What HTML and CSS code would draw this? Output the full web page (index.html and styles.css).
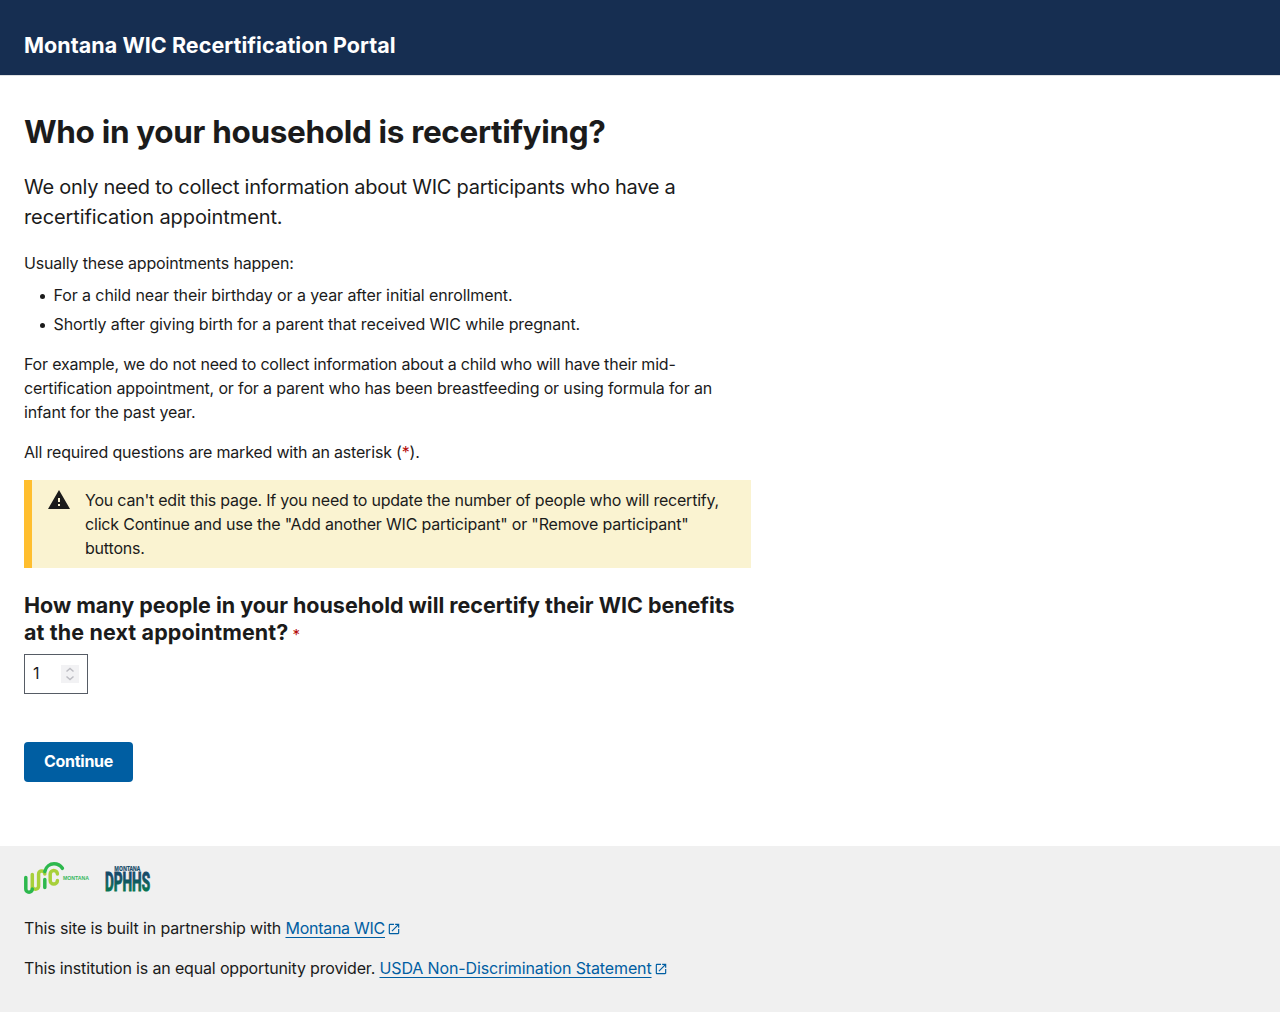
FILE: index.html
```
<!DOCTYPE html>
<html lang="en">
<head>
<meta charset="utf-8">
<title>Montana WIC Recertification Portal</title>
<link rel="stylesheet" href="styles.css">
</head>
<body>
<header class="header"><span class="site-title">Montana WIC Recertification Portal</span></header>
<main class="main">
  <h1 class="title">Who in your household is recertifying?</h1>
  <p class="intro"><span class="snug">We only need to collect information about WIC participants who have a</span><br><span>recertification appointment.</span></p>
  <p class="lead-in">Usually these appointments happen:</p>
  <ul class="list">
    <li><span class="birthday">For a child near their birthday or a year after initial enrollment.</span></li>
    <li><span>Shortly after giving birth for a parent that received WIC while pregnant.</span></li>
  </ul>
  <p class="example"><span class="snug">For example, we do not need to collect information about a child who will have their mid-</span><br><span>certification appointment, or for a parent who has been breastfeeding or using formula for an</span><br><span>infant for the past year.</span></p>
  <p class="required-note">All required questions are marked with an asterisk (<b class="star">*</b>).</p>
  <div class="alert">
    <svg class="alert-icon" viewBox="0 0 24 24"><path d="M1 21h22L12 2 1 21zm12-3h-2v-2h2v2zm0-4h-2v-4h2v4z"/></svg>
    <p class="alert-text"><span class="snug">You can't edit this page. If you need to update the number of people who will recertify,</span><br><span>click Continue and use the "Add another WIC participant" or "Remove participant"</span><br><span>buttons.</span></p>
  </div>
  <div class="question"><span class="snug">How many people in your household will recertify their WIC benefits</span><br><span>at the next appointment?</span><b class="star">*</b></div>
  <div class="number"><span class="number-value">1</span>
    <svg class="spinner" viewBox="0 0 18 18"><path d="M5.500 6.500 9 3.500l3.500 3M5.500 11.500 9 14.500l3.500-3"/></svg>
  </div>
  <button class="button" type="button">Continue</button>
</main>
<footer class="footer">
  <div class="logos">
    <svg class="wic-logo" viewBox="0 0 70 32">
      <g fill="none" stroke-width="3.500" stroke-linecap="round">
        <path stroke="#a8d03a" d="M8.300 27V12.500M8.300 24.500a3.200 3.200 0 0 0 6.300 0V12a3.100 3.100 0 0 1 6.200 0"/>
        <path stroke="#2db84d" d="M1.800 15.500V27a3.250 3.250 0 0 0 6.500 0"/>
        <path stroke="#2db84d" d="M20.800 17.500V25.500M20.800 9.500C22 4.500 26 1.800 30 1.800C34 1.800 36.500 3.500 38.400 6.300"/>
        <path stroke="#a8d03a" d="M33.400 12a3.600 3.600 0 0 0-7.200 0V18.500a3.600 3.600 0 0 0 7.200 0"/>
      </g>
      <text class="wic-name" x="39" y="17.600" textLength="26" lengthAdjust="spacingAndGlyphs">MONTANA</text>
    </svg>
    <svg class="dphhs-logo" viewBox="0 0 50 32">
      <defs><linearGradient id="teal" x1="0" y1="0" x2="0" y2="1"><stop offset="0.3" stop-color="#164b68"/><stop offset="0.8" stop-color="#087452"/></linearGradient></defs>
      <text class="dphhs-state" x="9.300" y="8.800" textLength="26" lengthAdjust="spacingAndGlyphs">MONTANA</text>
      <text class="dphhs-name" x="0" y="28.500" textLength="45" lengthAdjust="spacingAndGlyphs" fill="url(#teal)" stroke="url(#teal)">DPHHS</text>
    </svg>
  </div>
  <p class="foot-line"><span class="partner">This site is built in partnership with</span> <a class="link link-short" href="#">Montana WIC</a><svg class="external" viewBox="0 0 24 24"><path d="M19 19H5V5h7V3H5a2 2 0 0 0-2 2v14a2 2 0 0 0 2 2h14c1.100 0 2-.9 2-2v-7h-2v7zM14 3v2h3.590l-9.830 9.830 1.410 1.410L19 6.410V10h2V3h-7z"/></svg></p>
  <p class="foot-line"><span>This institution is an equal opportunity provider.</span> <a class="link" href="#">USDA Non-Discrimination Statement</a><svg class="external" viewBox="0 0 24 24"><path d="M19 19H5V5h7V3H5a2 2 0 0 0-2 2v14a2 2 0 0 0 2 2h14c1.100 0 2-.9 2-2v-7h-2v7zM14 3v2h3.590l-9.830 9.830 1.410 1.410L19 6.410V10h2V3h-7z"/></svg></p>
</footer>
</body>
</html>
```
FILE: styles.css
```
* { box-sizing: border-box; }
body { margin: 0; font: 16px/24px Inter, sans-serif; color: #1b1b1b; background: #fff; }
h1, p, ul { margin: 0; }
.header { height: 76px; background: #162e51; border-bottom: 1px solid #dfe1e2; padding: 32px 24px 0; color: #fff; }
.site-title { display: block; font-weight: 700; font-size: 21.5px; line-height: 27px; letter-spacing: 0.05px; }
.main { height: 770px; padding: 36px 24px 0; width: 775px; white-space: nowrap; }
.title { font-size: 31.5px; line-height: 40px; letter-spacing: -0.34px; }
.intro { font-size: 20px; line-height: 30px; margin-top: 20px; letter-spacing: -0.1px; }
.intro .snug { letter-spacing: -0.263px; }
.lead-in { margin-top: 19px; letter-spacing: -0.17px; }
.list { margin-top: 8px; padding-left: 16px; list-style: none; letter-spacing: -0.12px; }
.list li { display: flex; align-items: center; margin-bottom: 5px; }
.list li::before { content: ""; width: 5px; height: 5px; border-radius: 50%; background: #1b1b1b; margin: 2px 8.5px 0 0; }
.list .birthday { letter-spacing: -0.095px; }
.example { margin-top: 16px; letter-spacing: -0.15px; }
.example .snug { letter-spacing: -0.2px; }
.required-note { margin-top: 16px; letter-spacing: -0.19px; }
.star { color: #b50909; font-weight: 400; }
.alert { display: flex; width: 727px; height: 88px; margin-top: 16px; background: #faf3d1; border-left: 8px solid #ffbe2e; padding: 8px 16px 8px 15px; }
.alert-icon { flex: none; width: 24px; height: 24px; margin-right: 14px; fill: #1b1b1b; }
.alert-text { letter-spacing: -0.195px; }
.alert-text .snug { letter-spacing: -0.22px; }
.question { margin-top: 24px; font-weight: 700; font-size: 21.5px; line-height: 27px; letter-spacing: 0.115px; }
.question .snug { letter-spacing: -0.025px; }
.question .star { font-size: 15px; margin-left: 4px; }
.number { display: flex; align-items: center; justify-content: space-between; width: 64px; height: 40px; margin-top: 6px; border: 1px solid #565c65; padding: 0 8px; line-height: 22px; }
.number-value { padding-bottom: 2px; }
.spinner { width: 18px; height: 18px; background: #f2f2f4; fill: none; stroke: #bcbcc2; stroke-width: 1.5; }
.button { display: block; width: 109px; height: 40px; margin-top: 48px; padding: 0 0 2px; border: 0; border-radius: 4px; background: #005ea2; color: #fff; font: 700 16px/16px Inter, sans-serif; letter-spacing: -0.28px; }
.footer { height: 166px; background: #f0f0f0; padding: 16px 24px 0; letter-spacing: -0.16px; white-space: nowrap; }
.logos { display: flex; gap: 11px; height: 32px; letter-spacing: 0; }
.wic-logo { width: 70px; height: 32px; overflow: visible; }
.dphhs-logo { width: 50px; height: 32px; overflow: visible; }
.wic-name { font: 700 6.2px "Liberation Sans", sans-serif; fill: #35b85c; }
.dphhs-state { font: 700 6.5px/1 "Noto Sans", sans-serif; fill: #164b68; stroke: #164b68; stroke-width: 0.2; }
.dphhs-name { font: 700 25px Roboto, sans-serif; stroke-width: 1.1; }
.foot-line { margin-top: 16px; }
.logos + .foot-line { margin-top: 22px; }
.partner { letter-spacing: -0.14px; }
.link { color: #005ea2; letter-spacing: -0.13px; text-decoration: underline; text-underline-offset: 3px; text-decoration-thickness: 1px; }
.link-short { letter-spacing: -0.27px; }
.external { width: 14px; height: 14px; fill: #005ea2; margin-left: 2px; vertical-align: -2px; }
```
